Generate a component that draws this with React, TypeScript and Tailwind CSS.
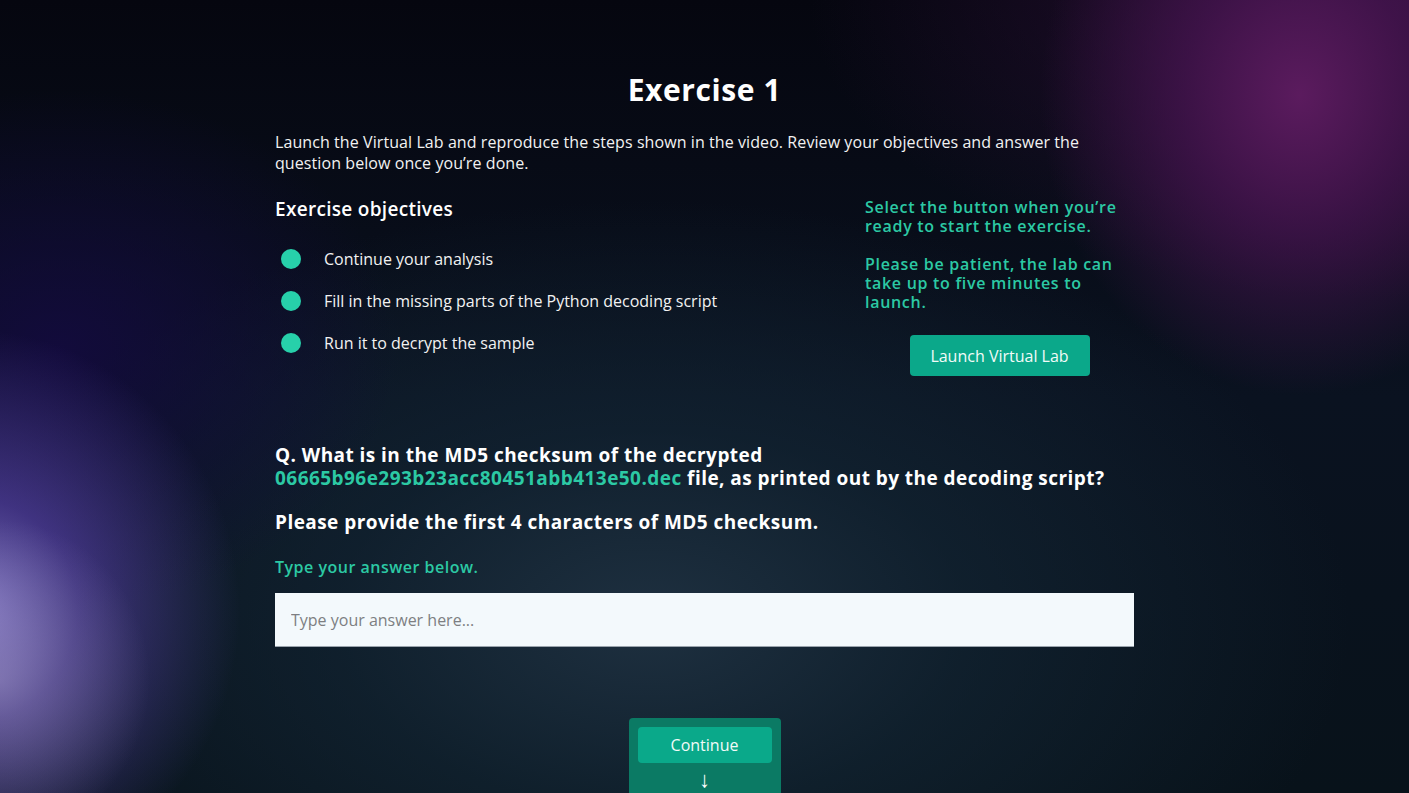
import React from "react";

const objectives = [
  "Continue your analysis",
  "Fill in the missing parts of the Python decoding script",
  "Run it to decrypt the sample",
];

export default function App() {
  return (
    <div className="relative min-h-[793px] h-[793px] w-full overflow-hidden bg-[#03040c] bg-[radial-gradient(ellipse_260px_300px_at_1300px_95px,#5b1b5e_0%,rgba(70,20,80,0.75)_45%,rgba(40,10,50,0)_100%),radial-gradient(ellipse_150px_160px_at_0px_680px,rgba(190,180,220,0.4)_0%,rgba(120,100,170,0)_100%),radial-gradient(ellipse_270px_280px_at_-30px_610px,#7e73c0_0%,rgba(85,65,165,0.7)_40%,rgba(40,25,110,0)_100%),radial-gradient(ellipse_340px_260px_at_60px_350px,rgba(20,10,65,0.85)_0%,rgba(10,5,50,0)_100%),radial-gradient(ellipse_700px_420px_at_650px_620px,#1e3040_0%,rgba(20,40,55,0.6)_45%,rgba(5,15,25,0)_100%),radial-gradient(ellipse_600px_300px_at_1409px_0px,#2a0f35_0%,rgba(30,10,40,0)_100%),linear-gradient(180deg,#05060f_0%,#0a1220_50%,#08121a_100%)] font-['Open_Sans',sans-serif] text-[#f2f2f2]">
      <div className="mx-auto flex w-[859px] flex-col pt-[70px]">
        <h1 className="text-center text-[30px] font-bold leading-[40px] text-white tracking-[0.6px]">
          Exercise 1
        </h1>
        <p className="mt-[22px] text-[16px] leading-[21px] tracking-[0.08px]">
          Launch the Virtual Lab and reproduce the steps shown in the video. Review your objectives and answer the question below once you’re done.
        </p>

        <div className="mt-[21px] flex justify-between">
          <div className="flex flex-col">
            <h2 className="text-[19px] font-semibold leading-[28px] text-white tracking-[0.3px]">Exercise objectives</h2>
            <ul className="mt-[26px] flex flex-col gap-[22px]">
              {objectives.map((o) => (
                <li key={o} className="flex items-center gap-[23px] pl-[6px]">
                  <span className="h-[20px] w-[20px] rounded-full bg-[#27d0aa]" />
                  <span className="text-[16px] leading-[20px]">{o}</span>
                </li>
              ))}
            </ul>
          </div>
          <div className="flex w-[269px] flex-col pt-[3px]">
            <div className="w-[256px] text-[16px] font-semibold leading-[19px] tracking-[0.7px] text-[#2cc9a4]">
              <p>Select the button when you’re ready to start the exercise.</p>
              <p className="mt-[19px]">Please be patient, the lab can take up to five minutes to launch.</p>
            </div>
            <div className="mt-[23px] flex justify-center">
              <button className="h-[41px] w-[180px] rounded-[4px] bg-[#0ba88a] text-[16px] text-[#f2fbf8]">
                Launch Virtual Lab
              </button>
            </div>
          </div>
        </div>

        <div className="mt-[68px] text-[19px] font-bold leading-[23px] tracking-[0.45px] text-white">
          <p>
            Q. What is in the MD5 checksum of the decrypted
            <br />
            <span className="text-[#2cc9a4]">06665b96e293b23acc80451abb413e50.dec</span> file, as printed out by the decoding script?
          </p>
          <p className="mt-[21px]">Please provide the first 4 characters of MD5 checksum.</p>
        </div>
        <p className="mt-[22px] text-[16px] font-semibold leading-[22px] tracking-[0.5px] text-[#2cc9a4]">Type your answer below.</p>
        <input
          className="mt-[15px] h-[54px] w-full border-b border-[#9aa4ad] bg-[#f3f9fc] px-[16px] text-[16px] text-[#333] outline-none placeholder:text-[#7d7f82]"
          placeholder="Type your answer here..."
        />

        <div className="mt-[71px] flex justify-center">
          <div className="flex w-[152px] flex-col items-center rounded-t-[4px] bg-[#0b7a64] px-[9px] pt-[9px] pb-[8px]">
            <button className="h-[36px] w-full rounded-[4px] bg-[#0aa98a] text-[16px] text-[#f2fbf8]">Continue</button>
            <span className="mt-[1px] text-[22px] leading-[28px] text-white">↓</span>
          </div>
        </div>
      </div>
    </div>
  );
}
